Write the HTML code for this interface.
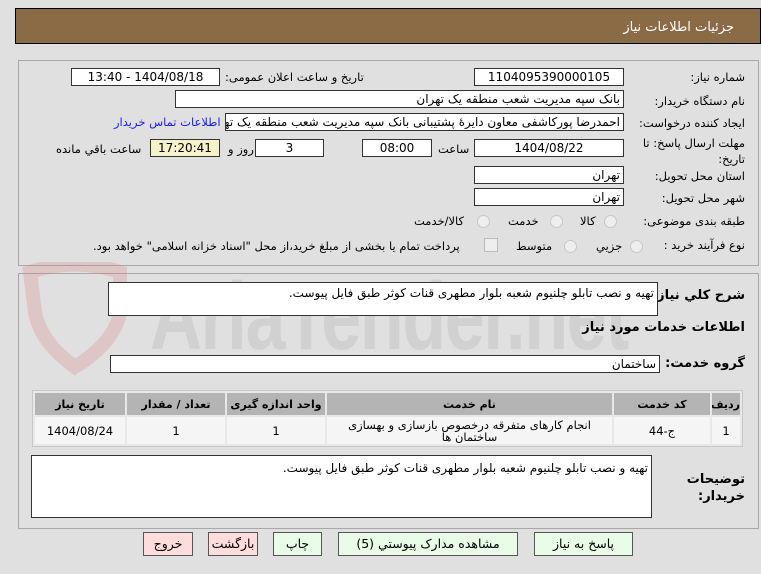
<!DOCTYPE html>
<html><head><meta charset="utf-8"><style>
*{box-sizing:border-box;margin:0;padding:0}
body{width:761px;height:574px;background:#e0e0e0;font-family:Tahoma,"DejaVu Sans","Liberation Sans",sans-serif;font-size:11.5px;color:#000;position:relative;overflow:hidden}
.a{position:absolute;white-space:nowrap}
.hdr{left:15px;top:8px;width:746px;height:36px;background:#8b6b45;border:1px solid #000;color:#fff;font-size:13px;text-align:right;padding:11px 26px 0 0}
.pn{position:absolute;border:1px solid #a8a8a8;background:transparent}
.in{position:absolute;background:#fff;border:1px solid #333;height:18px;font-size:12px;line-height:16px;text-align:center;overflow:hidden;white-space:nowrap}
.r{text-align:right;padding-right:3px}
.l{font-size:11.5px}
.rad{position:absolute;width:13px;height:13px;border-radius:50%;border:1px solid #c8c8c8;background:#eee}
.btn{position:absolute;top:532px;height:24px;border:1px solid #555;background:#e8fce8;font-size:12.5px;text-align:center;line-height:22px}
table{position:absolute;left:32px;top:390px;width:711px;border-collapse:separate;border-spacing:2px;background:#e8e8e8;border:1px solid #c8c8c8;table-layout:fixed}
th{background:#b4b4b4;height:22px;font-size:11px;white-space:nowrap;overflow:hidden}
td{background:#f5f5f5;height:27px;text-align:center;font-size:11.5px;line-height:12px}
.wm{position:absolute;left:150px;top:262px;font-size:96px;font-weight:bold;color:rgba(150,150,150,0.2);font-family:"Liberation Sans",sans-serif;letter-spacing:-2px;transform:scaleX(0.75);transform-origin:left}
</style></head><body dir="rtl">
<div class="a hdr">جزئیات اطلاعات نیاز</div>
<div class="pn" style="left:18px;top:60px;width:741px;height:206px"></div>
<div class="pn" style="left:18px;top:273px;width:741px;height:256px"></div>
<svg class="a" style="left:20px;top:262px" width="130" height="120"><path d="M10 10 Q55 -5 100 10 L100 50 Q95 80 55 105 Q20 80 15 50 Z" fill="none" stroke="rgba(220,120,120,0.25)" stroke-width="14"/></svg>
<div class="wm" dir="ltr">AriaTender.net</div>

<div class="a l" style="right:16px;top:70px">شماره نیاز:</div>
<div class="in" style="left:474px;top:68px;width:150px">1104095390000105</div>
<div class="a l" style="left:225px;top:70px">تاریخ و ساعت اعلان عمومی:</div>
<div class="in" style="left:71px;top:68px;width:149px">1404/08/18 - 13:40</div>

<div class="a l" style="right:16px;top:94px">نام دستگاه خریدار:</div>
<div class="in r" style="left:175px;top:90px;width:449px">بانک سپه مدیریت شعب منطقه یک تهران</div>

<div class="a l" style="right:16px;top:116px">ایجاد کننده درخواست:</div>
<div class="in r" style="left:225px;top:113px;width:399px">احمدرضا پورکاشفی معاون دایرهٔ پشتیبانی بانک سپه مدیریت شعب منطقه یک تهران</div>
<div class="a l" style="left:114px;top:115px;color:#1a1aff">اطلاعات تماس خریدار</div>

<div class="a l" style="right:16px;top:136px">مهلت ارسال پاسخ: تا</div>
<div class="a l" style="right:16px;top:152px">تاریخ:</div>
<div class="in" style="left:474px;top:139px;width:150px">1404/08/22</div>
<div class="a l" style="left:438px;top:142px">ساعت</div>
<div class="in" style="left:362px;top:139px;width:70px">08:00</div>
<div class="in" style="left:255px;top:139px;width:69px">3</div>
<div class="a l" style="left:228px;top:142px">روز و</div>
<div class="in" style="left:150px;top:139px;width:70px;background:#f5f2c8">17:20:41</div>
<div class="a l" style="left:56px;top:142px">ساعت باقي مانده</div>

<div class="a l" style="right:16px;top:169px">استان محل تحویل:</div>
<div class="in r" style="left:474px;top:166px;width:150px">تهران</div>
<div class="a l" style="right:16px;top:191px">شهر محل تحویل:</div>
<div class="in r" style="left:474px;top:188px;width:150px">تهران</div>

<div class="a l" style="right:16px;top:214px">طبقه بندی موضوعی:</div>
<div class="rad" style="left:604px;top:215px"></div><div class="a l" style="left:580px;top:214px">کالا</div>
<div class="rad" style="left:550px;top:215px"></div><div class="a l" style="left:508px;top:214px">خدمت</div>
<div class="rad" style="left:477px;top:215px"></div><div class="a l" style="left:414px;top:214px">کالا/خدمت</div>

<div class="a l" style="right:16px;top:238px">نوع فرآیند خرید :</div>
<div class="rad" style="left:630px;top:240px"></div><div class="a l" style="left:596px;top:239px">جزیي</div>
<div class="rad" style="left:564px;top:240px"></div><div class="a l" style="left:516px;top:239px">متوسط</div>
<div class="a" style="left:484px;top:238px;width:14px;height:14px;border:1px solid #bbb;background:#eee"></div>
<div class="a l" style="left:93px;top:239px">پرداخت تمام یا بخشی از مبلغ خرید،از محل "اسناد خزانه اسلامی" خواهد بود.</div>

<div class="a" style="right:16px;top:288px;font-weight:bold;font-size:13px">شرح کلي نیاز:</div>
<div class="in r" style="left:108px;top:282px;width:550px;height:34px;text-align:right;line-height:16px;padding-top:2px">تهیه و نصب تابلو چلنیوم شعبه بلوار مطهری قنات کوثر طبق فایل پیوست.</div>
<div class="a" style="right:16px;top:320px;font-weight:bold;font-size:13px">اطلاعات خدمات مورد نیاز</div>
<div class="a" style="right:16px;top:356px;font-weight:bold;font-size:13px">گروه خدمت:</div>
<div class="in r" style="left:110px;top:355px;width:550px">ساختمان</div>

<table><colgroup><col style="width:28px"><col style="width:96px"><col style="width:285px"><col style="width:98px"><col style="width:98px"><col></colgroup>
<tr><th>ردیف</th><th>کد خدمت</th><th>نام خدمت</th><th>واحد اندازه گیری</th><th>تعداد / مقدار</th><th>تاریخ نیاز</th></tr>
<tr><td>1</td><td>ج-44</td><td>انجام کارهای متفرقه درخصوص بازسازی و بهسازی ساختمان ها</td><td>1</td><td>1</td><td>1404/08/24</td></tr></table>

<div class="a" style="right:16px;top:471px;font-weight:bold;font-size:13px;line-height:17px;text-align:right">توضیحات<br>خریدار:</div>
<div class="in r" style="left:31px;top:455px;width:621px;height:63px;text-align:right;line-height:16px;padding-top:4px">تهیه و نصب تابلو چلنیوم شعبه بلوار مطهری قنات کوثر طبق فایل پیوست.</div>

<div class="btn" style="left:534px;width:99px">پاسخ به نیاز</div>
<div class="btn" style="left:338px;width:180px">مشاهده مدارک پیوستي (5)</div>
<div class="btn" style="left:273px;width:49px">چاپ</div>
<div class="btn" style="left:208px;width:50px;background:#fdd">بازگشت</div>
<div class="btn" style="left:143px;width:50px;background:#fdd">خروج</div>
</body></html>
